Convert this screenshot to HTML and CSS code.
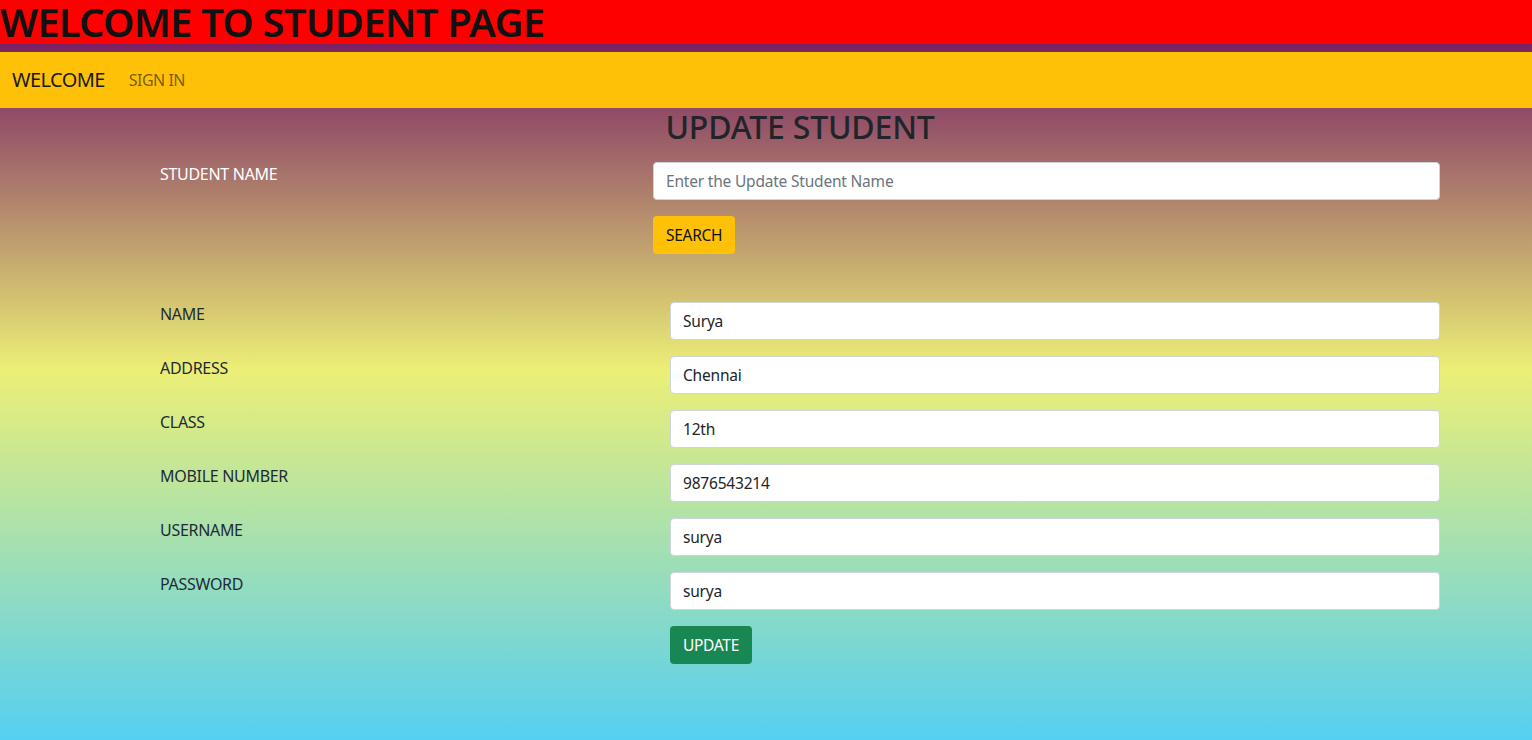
FILE: index.html
```html
<!DOCTYPE html>
<html lang="en">
<head>
<meta charset="utf-8">
<title>Student Page</title>
<link rel="stylesheet" href="styles.css">
</head>
<body>
<header class="top">
  <h1 class="top-title">WELCOME TO STUDENT PAGE</h1>
</header>
<nav class="navbar">
  <span class="brand">WELCOME</span>
  <a class="nav-link" href="#">SIGN IN</a>
</nav>
<main class="page">
  <h2 class="page-title">UPDATE STUDENT</h2>
  <form class="search-form">
    <label class="label label-light">STUDENT NAME</label>
    <div class="field">
      <input class="input" type="text" placeholder="Enter the Update Student Name">
      <button class="btn btn-warning" type="button">SEARCH</button>
    </div>
  </form>
  <form class="update-form">
    <label class="label">NAME</label>
    <input class="input" type="text" value="Surya">
    <label class="label">ADDRESS</label>
    <input class="input" type="text" value="Chennai">
    <label class="label">CLASS</label>
    <input class="input" type="text" value="12th">
    <label class="label">MOBILE NUMBER</label>
    <input class="input" type="text" value="9876543214">
    <label class="label">USERNAME</label>
    <input class="input" type="text" value="surya">
    <label class="label">PASSWORD</label>
    <input class="input" type="text" value="surya">
    <span></span>
    <div class="actions">
      <button class="btn btn-success" type="button">UPDATE</button>
    </div>
  </form>
</main>
</body>
</html>
```
FILE: styles.css
```css
html {
  height: 100%;
}
body {
  margin: 0;
  min-height: 100%;
  font-family: "Noto Sans", "Open Sans", sans-serif;
  font-size: 16px;
  line-height: 1.5;
  color: #212529;
  background: linear-gradient(to bottom, #6a0561 0%, #ecef76 50%, #55cff2 100%);
  background-attachment: fixed;
}
.top {
  background: #ff0000;
  height: 44px;
  margin-bottom: 8px;
}
.top-title {
  margin: 0;
  font-size: 40px;
  font-weight: 600;
  line-height: 44px;
  color: #111;
  letter-spacing: -0.8px;
}
.navbar {
  background: #ffc107;
  height: 56px;
  display: flex;
  align-items: center;
  padding: 0 12px;
}
.brand {
  font-size: 20px;
  color: #1a1a1a;
  margin-right: 24px;
  letter-spacing: -0.6px;
}
.nav-link {
  color: rgba(0, 0, 0, 0.55);
  text-decoration: none;
  font-size: 16px;
  letter-spacing: -0.5px;
}
.page {
  padding-left: 160px;
}
.page-title {
  margin: 0 0 16px 0;
  margin-left: -92px;
  text-align: center;
  font-size: 32px;
  font-weight: 500;
  line-height: 38px;
  color: #212529;
  letter-spacing: -0.2px;
}
.search-form {
  display: grid;
  grid-template-columns: 493px 787px;
  margin-bottom: 48px;
}
.update-form {
  display: grid;
  grid-template-columns: 510px 770px;
  row-gap: 16px;
}
.field {
  display: flex;
  flex-direction: column;
  align-items: flex-start;
  gap: 16px;
}
.label {
  line-height: 24px;
  color: #1e2b36;
  letter-spacing: -0.3px;
}
.label-light {
  color: #ffffff;
}
.input {
  box-sizing: border-box;
  width: 100%;
  height: 38px;
  padding: 6px 12px;
  font-family: inherit;
  font-size: 15.5px;
  color: #212529;
  background: #fff;
  border: 1px solid #ced4da;
  border-radius: 4px;
  letter-spacing: -0.2px;
}
.input::placeholder {
  color: #6c757d;
}
.btn {
  height: 38px;
  padding: 6px 12px;
  font-family: inherit;
  font-size: 15.5px;
  border: 1px solid transparent;
  border-radius: 4px;
  letter-spacing: -0.3px;
}
.btn-warning {
  background: #ffc107;
  color: #111;
}
.btn-success {
  background: #198754;
  color: #fff;
}
```
